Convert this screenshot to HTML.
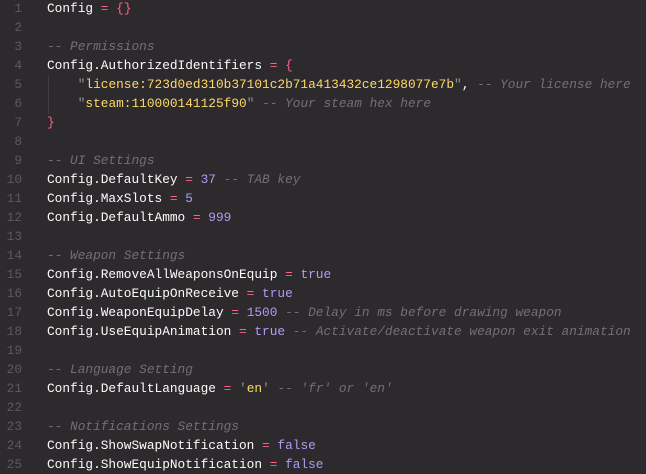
<!DOCTYPE html>
<html><head><style>
body{margin:0;background:#2d2a2e;width:646px;height:474px;overflow:hidden}
.c{position:absolute;top:-1px;left:0;font-family:"Liberation Mono",monospace;font-size:12.8px;line-height:19px;color:#fcfcfa}
.l{display:block;height:19px;white-space:pre}
.n{display:inline-block;width:22px;text-align:right;color:#5b595c;margin-right:25px}
.o{color:#ff6188}.s{color:#ffd866}.p{color:#ab9df2}.m{color:#727072;font-style:italic}.g{color:#939293}
.ig{position:absolute;left:48px;top:76px;width:1px;height:38px;background:#403e41}
</style></head><body>
<div class="ig"></div>
<div class="c"><span class="l"><span class="n">1</span>Config <span class="o">=</span> <span class="o">{}</span></span><span class="l"><span class="n">2</span></span><span class="l"><span class="n">3</span><span class="m">-- Permissions</span></span><span class="l"><span class="n">4</span>Config.AuthorizedIdentifiers <span class="o">=</span> <span class="o">{</span></span><span class="l"><span class="n">5</span>    <span class="g">"</span><span class="s">license:723d0ed310b37101c2b71a413432ce1298077e7b</span><span class="g">"</span>, <span class="m">-- Your license here</span></span><span class="l"><span class="n">6</span>    <span class="g">"</span><span class="s">steam:110000141125f90</span><span class="g">"</span> <span class="m">-- Your steam hex here</span></span><span class="l"><span class="n">7</span><span class="o">}</span></span><span class="l"><span class="n">8</span></span><span class="l"><span class="n">9</span><span class="m">-- UI Settings</span></span><span class="l"><span class="n">10</span>Config.DefaultKey <span class="o">=</span> <span class="p">37</span> <span class="m">-- TAB key</span></span><span class="l"><span class="n">11</span>Config.MaxSlots <span class="o">=</span> <span class="p">5</span></span><span class="l"><span class="n">12</span>Config.DefaultAmmo <span class="o">=</span> <span class="p">999</span></span><span class="l"><span class="n">13</span></span><span class="l"><span class="n">14</span><span class="m">-- Weapon Settings</span></span><span class="l"><span class="n">15</span>Config.RemoveAllWeaponsOnEquip <span class="o">=</span> <span class="p">true</span></span><span class="l"><span class="n">16</span>Config.AutoEquipOnReceive <span class="o">=</span> <span class="p">true</span></span><span class="l"><span class="n">17</span>Config.WeaponEquipDelay <span class="o">=</span> <span class="p">1500</span> <span class="m">-- Delay in ms before drawing weapon</span></span><span class="l"><span class="n">18</span>Config.UseEquipAnimation <span class="o">=</span> <span class="p">true</span> <span class="m">-- Activate/deactivate weapon exit animation</span></span><span class="l"><span class="n">19</span></span><span class="l"><span class="n">20</span><span class="m">-- Language Setting</span></span><span class="l"><span class="n">21</span>Config.DefaultLanguage <span class="o">=</span> <span class="g">'</span><span class="s">en</span><span class="g">'</span> <span class="m">-- 'fr' or 'en'</span></span><span class="l"><span class="n">22</span></span><span class="l"><span class="n">23</span><span class="m">-- Notifications Settings</span></span><span class="l"><span class="n">24</span>Config.ShowSwapNotification <span class="o">=</span> <span class="p">false</span></span><span class="l"><span class="n">25</span>Config.ShowEquipNotification <span class="o">=</span> <span class="p">false</span></span></div>
</body></html>
